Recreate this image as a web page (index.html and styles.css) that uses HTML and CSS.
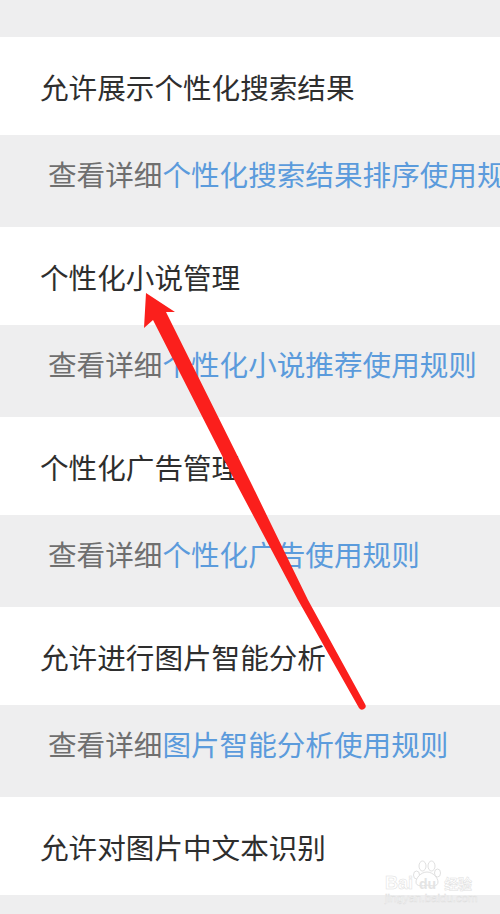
FILE: index.html
```html
<!DOCTYPE html>
<html lang="zh-CN">
<head>
    <meta charset="UTF-8">
    <meta name="viewport" content="width=device-width, initial-scale=1.0">
    <title>个性化设置</title>
    <link rel="stylesheet" href="styles.css">
</head>
<body>

<div class="page">
    <div class="setting">允许展示个性化搜索结果</div>
    <div class="detail">查看详细<a href="#">个性化搜索结果排序使用规则</a></div>

    <div class="setting">个性化小说管理</div>
    <div class="detail">查看详细<a href="#">个性化小说推荐使用规则</a></div>

    <div class="setting">个性化广告管理</div>
    <div class="detail">查看详细<a href="#">个性化广告使用规则</a></div>

    <div class="setting">允许进行图片智能分析</div>
    <div class="detail">查看详细<a href="#">图片智能分析使用规则</a></div>

    <div class="setting">允许对图片中文本识别</div>

    <!-- red arrow drawn over the list -->
    <svg class="arrow" width="500" height="914" viewBox="0 0 500 914">
        <path d="M146 293 L175 312 L166 312 L252 485 L308 600 L365 704 A3.6 3.6 0 0 1 359 708 L298 600 L237 485 L153 320 L144 328 Z" fill="#fb1f1c"/>
    </svg>

    <div class="watermark">
        <svg class="paw" width="28" height="27" viewBox="0 0 28 27">
            <g fill="#fff" stroke="#e0e0e0" stroke-width="1">
                <ellipse cx="3.5" cy="15" rx="3" ry="4"/>
                <ellipse cx="9.5" cy="6" rx="3.5" ry="5"/>
                <ellipse cx="18.5" cy="6" rx="3.5" ry="5"/>
                <ellipse cx="24.5" cy="13" rx="3" ry="4"/>
                <path d="M14 12 C20 12 25 18 25 22 C25 27 18 26 14 25 C10 26 3 27 3 22 C3 18 8 12 14 12 Z"/>
            </g>
        </svg>
        <div class="mark-logo"><span>Bai</span><span class="mark-du">du</span><span class="mark-cn">经验</span></div>
        <div class="mark-url">jingyan.baidu.com</div>
    </div>
</div>

</body>
</html>
```

FILE: styles.css
```css
body {
    margin: 0;
    padding: 0;
    background-color: #eeeeef;
    font-family: "Noto Sans CJK SC", "Liberation Sans", sans-serif;
}
.page {
    position: relative;
    width: 500px;
    height: 914px;
    padding-top: 37px;
    box-sizing: border-box;
    overflow: hidden;
}
.setting {
    height: 98px;
    padding-left: 40px;
    background-color: #fff;
    color: #2e2e2e;
    font-size: 28.6px;
    line-height: 99px;
    white-space: nowrap;
}
.detail {
    height: 92px;
    padding-left: 48px;
    color: #6f6f6f;
    font-size: 28.6px;
    line-height: 77px;
    white-space: nowrap;
    overflow: hidden;
}
.detail a {
    color: #5b9bdc;
    text-decoration: none;
}
.arrow {
    position: absolute;
    top: 0;
    left: 0;
}
.watermark {
    position: absolute;
    top: 860px;
    left: 385px;
    width: 112px;
}
.paw {
    position: absolute;
    top: 0;
    left: 28px;
}
.mark-logo {
    position: absolute;
    top: 11px;
    left: 0;
    font-family: "Liberation Sans", sans-serif;
    font-size: 18px;
    font-weight: bold;
    line-height: 24px;
    color: #fff;
    white-space: nowrap;
    -webkit-text-stroke: 0.5px #e0e0e0;
}
.mark-du {
    position: relative;
    margin-left: 6px;
    font-size: 14px;
    color: #e4e4e4;
    -webkit-text-stroke: 0;
}
.mark-cn {
    margin-left: 8px;
    font-family: "Noto Sans CJK SC", sans-serif;
    font-size: 14px;
}
.mark-url {
    position: absolute;
    top: 31px;
    left: 0;
    font-family: "Liberation Sans", sans-serif;
    font-size: 11.5px;
    line-height: 14px;
    color: #fff;
    white-space: nowrap;
    -webkit-text-stroke: 0.5px #dedede;
}
```
